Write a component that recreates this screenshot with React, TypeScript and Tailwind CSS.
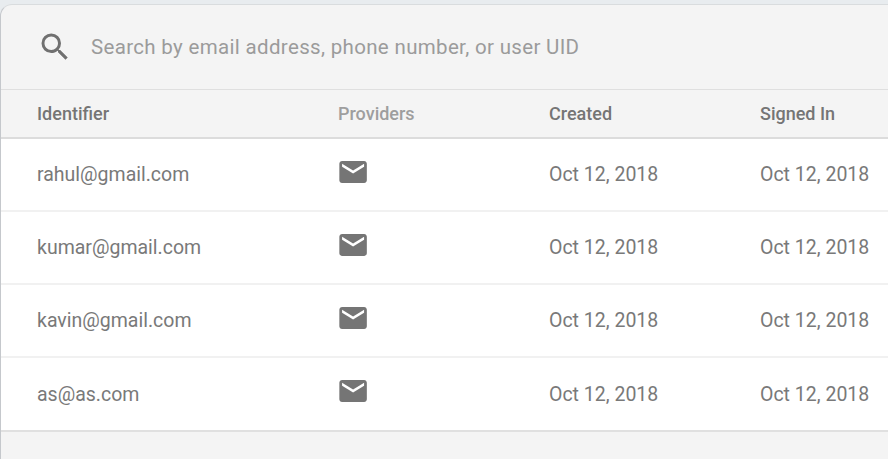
const users = ["rahul@gmail.com", "kumar@gmail.com", "kavin@gmail.com", "as@as.com"];
const cols = "grid grid-cols-[301px_211px_211px_1fr] pl-9";

function SearchIcon() {
  return (
    <svg viewBox="0 0 24 24" className="h-9 w-9 shrink-0 fill-[#707070]">
      <path d="M15.5 14h-.79l-.28-.27A6.471 6.471 0 0 0 16 9.5 6.5 6.5 0 1 0 9.5 16c1.61 0 3.09-.59 4.23-1.57l.27.28v.79l5 4.99L20.49 19l-4.99-5zm-6 0C7.01 14 5 11.99 5 9.5S7.01 5 9.5 5 14 7.01 14 9.5 11.99 14 9.5 14z" />
    </svg>
  );
}

function MailIcon() {
  return (
    <svg viewBox="0.3 -0.3 24 24" className="-ml-[1.5px] mt-4 h-[33px] w-[33px] fill-[#757575]">
      <path d="M20 4H4c-1.1 0-1.99.9-1.99 2L2 18c0 1.1.9 2 2 2h16c1.1 0 2-.9 2-2V6c0-1.1-.9-2-2-2zm0 4.2l-8 5-8-5V6l8 5 8-5v2.2z" />
    </svg>
  );
}

export default function App() {
  return (
    <div className="h-[459px] w-[888px] overflow-hidden bg-[#e8ecef] pt-1 font-['Roboto',sans-serif] text-[#757575]">
      <main className="h-[470px] w-[910px] overflow-hidden rounded-tl-[12px] border-l border-t border-l-[#c5c8cc] border-t-[#d9dcde] bg-[#f4f4f4]">
        <div className="flex h-[84px] items-center pl-9">
          <SearchIcon />
          <span className="ml-[18px] text-[20.5px] tracking-[0.33px] text-[#9b9b9b]">Search by email address, phone number, or user UID</span>
        </div>
        <div className={`${cols} h-12 items-center border-t border-[#dfdfdf] pb-px text-[18px] font-medium`}>
          <span>Identifier</span>
          <span className="text-[#9e9e9e]">Providers</span>
          <span>Created</span>
          <span>Signed In</span>
        </div>
        <div className="border-b-2 border-t-2 border-b-[#e0e0e0] border-t-[#dcdcdc] bg-white text-[19.5px] leading-[30px] text-[#797979]">
          {users.map((user) => (
            <div key={user} className={`${cols} group h-[73px] items-start border-b-2 border-[#f1f1f1] last:h-[72px] last:border-b-0`}>
              <span className="mt-[21px] group-last:mt-[22px]">{user}</span>
              <MailIcon />
              <span className="mt-[21px] group-last:mt-[22px]">Oct 12, 2018</span>
              <span className="mt-[21px] group-last:mt-[22px]">Oct 12, 2018</span>
            </div>
          ))}
        </div>
      </main>
    </div>
  );
}
